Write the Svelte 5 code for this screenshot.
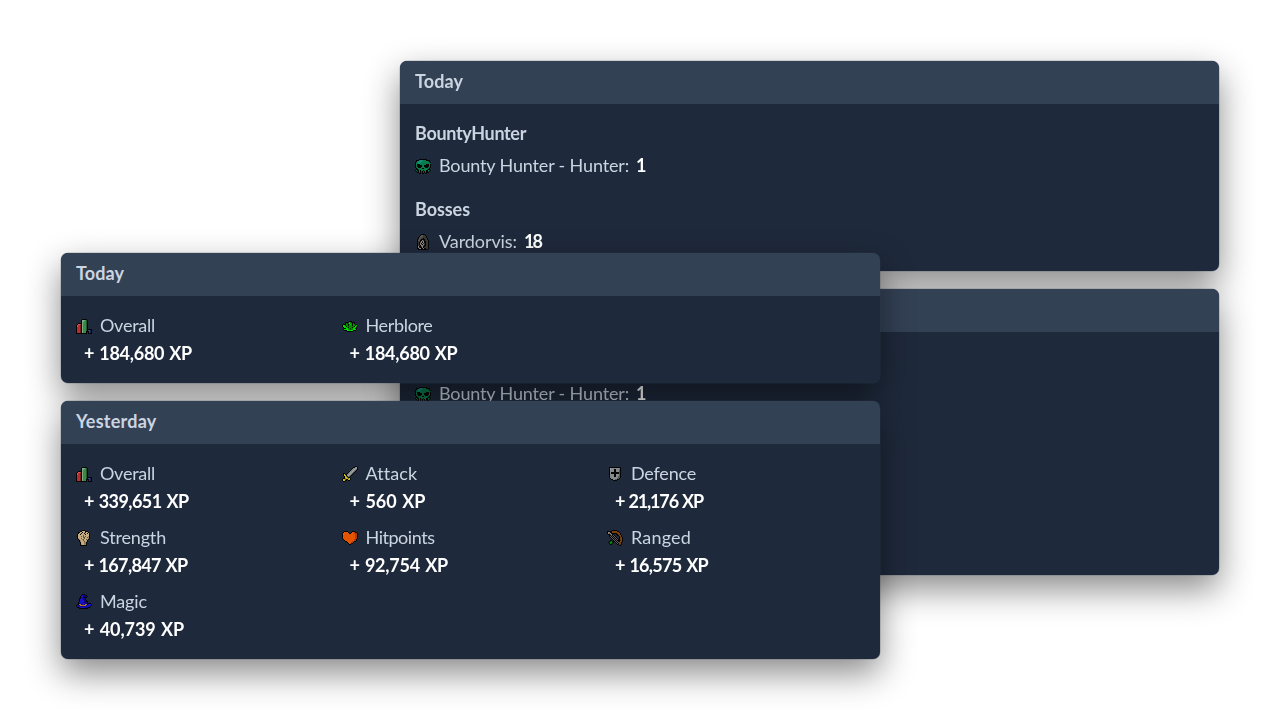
<script>
  const palette = {
    k: '#050505', r: '#b92d30', R: '#e05a55', d: '#761d20', g: '#3c8a48', G: '#7cab7f', e: '#1f5a2a', b: '#2c4598', B: '#17245a',
    l: '#00d800', L: '#008b00', m: '#004c00', s: '#c5ac80', S: '#9b8158', t: '#665237', w: '#858989', W: '#a4a7a7', x: '#54595a',
    y: '#c9bd17', Y: '#7e760c', o: '#e35300', O: '#b53c00', p: '#e8660f', n: '#7b3e0d', N: '#492508', u: '#1712c8', U: '#11057e', v: '#33128f',
    c: '#0a7c4c', C: '#129078', D: '#075837', h: '#3b3938', H: '#5c5856', i: '#8f8a85', z: '#7d4a44', a: '#b07a28'
  };
  const icons = {
    overall: [
      '................', '......kkkkk.....', '.....kGGGgek....', '.....kGGggek....', '.....kGgggek....', '..kkkkGgggek....',
      '.kRRrkGgggek....', 'kRrrdkGgggek....', 'kRrrdkGgggek....', 'krrrdkGgggek....', 'krrrdkGgggek....', 'krrrdkGgggekkkkk',
      'krrrdkGgggekbbBk', 'krrrdkGgggkkkbBk', 'krrrdkGgggk.kbBk', 'kkkkkkkkkkk.kkkk'],
    herblore: [
      '................', '................', '................', '.......kkk......', '...kkkklLkkkk...', '...kLkLlLLkLk...',
      '.kkkLLkLlLkLLkk.', 'kllkLLkLLLkLLklk', 'klllkLLLLLLLklLk', '.klllLkLLLkLllk.', '..kkllLLmLLllkk.', '.kllllLLmLLlllk.',
      '..kkkllllllkkk..', '.....kkkkkk.....', '................', '................'],
    strength: [
      '......kkk.......', '....kkssskkk....', '..kkssksskssk...', '..kssksskssksk..', '.ksskssssksssk..', '.kssssstsssssk..',
      '.kssstststssSk..', '.ksssssttsstSk..', '.kSsstsstsssSk..', '..kSssStsstSk...', '...kSsstsssk....', '...kSssstsSk....',
      '....ksssSSk.....', '....ksssSSk.....', '....kSssSSk.....', '....kkkkkkk.....'],
    attack: [
      '.............kk.', '...........kkwWk', '..........kwwWwk', '.........kwwWwxk', '........kwwWwxk.', '.......kwwWwxk..',
      '......kwwWwxk...', '.kk..kwwWwxk....', '.kykkwwWwxk.....', '.kyykwWwxk......', '..kyYkwxk.......', '..kyyYkk........',
      '.kkYyyYyk.......', 'kyyYkkyyk.......', 'kyykk.kk........', '.kk.............'],
    hitpoints: [
      '................', '..kkkk....kkk...', '.kpoook..kooOkk.', 'kpoooookkoooOOOk', 'kpoooooooooooOOk', 'kooooooooooooOOk',
      'kooooooooooooOOk', 'kooooooooooooOOk', 'kooooooooooooOOk', '.kooooooooooOOk.', '..koooooooooOOk.', '...kkoooooOOkk..',
      '.....koooOOk....', '......koOkk.....', '.......kk.......', '................'],
    defence: [
      '................', '..kkkkkkkkkkkk..', '..kWwwwwwwwwwk..', '..kWwwwkkwwwxk..', '..kwwwwkkwwwxk..', '..kwwwwkkwwwxk..',
      '..kwkkkkkkkkxk..', '..kwkkkkkkkkxk..', '..kwwwwkkwwwxk..', '..kwwwwkkwwwxk..', '..kwwwwkkwwxxk..', '..kwwwwwwwwxxk..',
      '...kwwwwwwxxk...', '....kkwwxxkk....', '......kkkk......', '................'],
    ranged: [
      '.....kkkkk......', 'kkkkknnnnnkk....', 'kiikknnnnnnnk...', 'kixikkkkkknnnk..', '.kkxikk..kknnk..', '..kkxkHk..kknnk.',
      '..kHkxkHk...knk.', '...kHkxkHk..knnk', '....kHkxkHk.knnk', '.....kHkxkHkknnk', '...kk.kHkxkkkNnk', '..kmLkkkHkxkknnk',
      '.kmLLmk.kHkxnnk.', '..kLmk...kHknnk.', '...kk.....kknNk.', '............kk..'],
    magic: [
      '......kkk.......', '.....kuUUkk.....', '....kuuUUUUk....', '....kuUkkkk.....', '...kkuuUUk......', '...kuuuUUk......',
      '...kuuuvUUk.....', '...kuuuvUUkk....', '..kuuuuuUUUk....', '..kUuuuuvUUkkkk.', '.kkaaUuvUaakuuuk', 'kuUUaaaaaaUuuuuk',
      'kuuuUUUUUUuuuUk.', '.kkUuuuuuUUUkk..', '...kkkkkkkkk....', '................'],
    skull: [
      '................', '....kkkkkkkk....', '.kkkcCCCccckkkk.', '.kcCCCCccccccDk.', 'kDcCCCccccccccDk', 'kccCCccccccccccD',
      'kckkkcccccckkkck', 'kckkkkkcckkkkkck', 'kckkkkkcckkkkkck', 'kDckkkcccckkkcDk', '.kDcccckkccccDk.', '.kkDccccccccDkk.',
      'kckkckcckcckkcDk', '.kDkckDkDkckkDk.', '..kkDkDkDkDkkk..', '....kk.kk.kk....'],
    vardorvis: [
      '......kkkk......', '.....kHHhhk.....', '....kHHHhhhk....', '...khHHhhhhk....', '...kHHhhkhhhk...', '..khHhkkkkhhk...',
      '..kHHkkihkhhhk..', '..khhkihikkhhk..', '..khkzikikkhhk..', '..khkikihhkhhk..', '..khkiHkihkhhk..', '..khhkiiHkkhhk..',
      '..kikkzikkhhhk..', '..kihkkikhhhhk..', '..kkiikkikkhhk..', '...kkkkkkkkkk...']
  };
  const today = [['overall', 'Overall', 55, '184,680', 108], ['herblore', 'Herblore', 67, '184,680', 108]];
  const yesterday = [
    ['overall', 'Overall', 55, '339,651', 104.5], ['attack', 'Attack', 51, '560', 76], ['defence', 'Defence', 65, '21,176', 88],
    ['strength', 'Strength', 66, '167,847', 103.5], ['hitpoints', 'Hitpoints', 69, '92,754', 98.5], ['ranged', 'Ranged', 60, '16,575', 93],
    ['magic', 'Magic', 47, '40,739', 100]
  ];

  // Track each label so that its advance width equals the given measure.
  function fit(node, width) {
    const natural = node.getBoundingClientRect().width;
    node.style.letterSpacing = `${(width - natural) / node.textContent.length}px`;
  }
</script>

{#snippet icon(name)}
  <svg class="icon" viewBox="0 0 16 16" shape-rendering="crispEdges" aria-hidden="true">
    {#each icons[name] as row, y}
      {#each [...row] as p, x}
        {#if p !== '.'}<rect {x} {y} width="1" height="1" fill={palette[p]} />{/if}
      {/each}
    {/each}
  </svg>
{/snippet}

{#snippet xpCard(title, width, items)}
  <section class="card">
    <header><span use:fit={width}>{title}</span></header>
    <div class="body grid">
      {#each items as [name, label, w, xp, xw]}
        <div>
          <div class="line">{@render icon(name)}<span use:fit={w}>{label}</span></div>
          <div class="line xp"><b use:fit={xw}>+ {xp} XP</b></div>
        </div>
      {/each}
    </div>
  </section>
{/snippet}

{#snippet hunter()}
  <div class="section">
    <h3><span use:fit={111}>BountyHunter</span></h3>
    <div class="line">{@render icon('skull')}<span use:fit={190}>Bounty Hunter - Hunter:</span><b use:fit={8}>1</b></div>
  </div>
{/snippet}

<main>
  <div class="stack back">
    <section class="card">
      <header><span use:fit={48}>Today</span></header>
      <div class="body">
        {@render hunter()}
        <div class="section">
          <h3><span use:fit={55}>Bosses</span></h3>
          <div class="line">{@render icon('vardorvis')}<span use:fit={78}>Vardorvis:</span><b use:fit={17}>18</b></div>
        </div>
      </div>
    </section>
    <section class="card tall">
      <header></header>
      <div class="body">{@render hunter()}</div>
    </section>
  </div>
  <div class="stack front">
    {@render xpCard('Today', 48, today)}
    {@render xpCard('Yesterday', 80.5, yesterday)}
  </div>
</main>

<style>
  :global(body) { margin: 0; background: #fff; }
  main { position: relative; width: 1280px; height: 720px; overflow: hidden; font: 400 18px/26px Lato, sans-serif; color: #cbd5e1; }
  .stack { position: absolute; width: 819px; display: flex; flex-direction: column; gap: 18px; filter: drop-shadow(0 14px 17px rgba(0, 0, 0, .46)); }
  .back { left: 400px; top: 61px; }
  .front { left: 61px; top: 253px; }
  .card { border-radius: 7px; overflow: hidden; background: #1e293b; box-shadow: 0 0 0 .5px rgba(51, 65, 85, .35); }
  .tall { height: 286px; }
  header { box-sizing: border-box; height: 43px; padding: 7px 15px; background: #334155; font-weight: 700; }
  .body { padding: 16px 15px 15px; }
  .grid { display: grid; grid-template-columns: repeat(3, 1fr); gap: 8px 7.5px; }
  .section + .section { margin-top: 16px; }
  h3 { height: 28px; margin: 0 0 4px; font: inherit; font-weight: 700; }
  .line { display: flex; align-items: flex-start; height: 28px; white-space: nowrap; }
  .icon { width: 16px; height: 16px; margin: 6px 8px 0 0; flex: none; }
  .line b { color: #fff; font-weight: 700; margin-left: 7px; }
  .xp b { margin-left: 8px; word-spacing: 1px; }
  span { white-space: nowrap; }
</style>
